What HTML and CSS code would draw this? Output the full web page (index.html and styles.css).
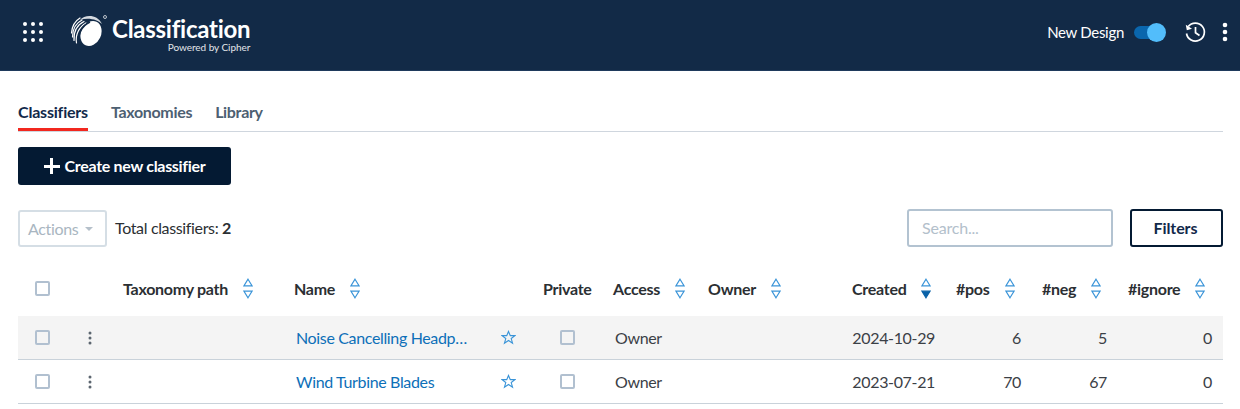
FILE: index.html
```html
<!DOCTYPE html>
<html lang="en">
<head>
<meta charset="utf-8">
<title>Classification</title>
<link rel="stylesheet" href="styles.css">
</head>
<body>
<header class="navbar">
  <div class="brand-group">
    <svg class="apps" viewBox="0 0 20 20" width="20" height="20" aria-hidden="true">
      <g fill="#fff">
        <circle cx="2" cy="2" r="2"/><circle cx="10" cy="2" r="2"/><circle cx="18" cy="2" r="2"/>
        <circle cx="2" cy="10" r="2"/><circle cx="10" cy="10" r="2"/><circle cx="18" cy="10" r="2"/>
        <circle cx="2" cy="18" r="2"/><circle cx="10" cy="18" r="2"/><circle cx="18" cy="18" r="2"/>
      </g>
    </svg>
    <svg class="logo" viewBox="0 0 38 34" width="38" height="34" aria-hidden="true">
      <ellipse cx="21" cy="19.500" rx="10" ry="13" fill="#fff" transform="rotate(25 21 19.500)"/>
      <path d="M10 6C15 0.500 27 0 32 10C28 5.500 18 3 10 6Z" fill="#d5dae0"/>
      <g fill="none" stroke="#fff" stroke-width="1.200" stroke-linecap="round">
        <path d="M1.500 19C2 12 5 7 10 4"/>
        <path d="M2.500 23C2.500 15 6 9 12 6"/>
        <path d="M4 26.500C3.500 18 7 11 14 7.500"/>
        <path d="M6.500 29C5 21 9 13 16 9"/>
      </g>
      <path d="M10 31C6.500 22 11 12 20 8" fill="none" stroke="#122a47" stroke-width="1.600"/>
      <circle cx="35" cy="3" r="1.500" fill="none" stroke="#fff" stroke-width=".7"/>
    </svg>
    <div class="brand">
      <span class="brand-name">Classification</span>
      <span class="brand-sub">Powered by Cipher</span>
    </div>
  </div>
  <div class="nav-right">
    <span class="nav-label">New Design</span>
    <span class="toggle"><span class="toggle-knob"></span></span>
    <svg class="history" viewBox="0 0 24 24" width="24" height="24" aria-hidden="true">
      <path d="M5.200 6.600A9 9 0 1 1 3.500 13.500" fill="none" stroke="#fff" stroke-width="1.700"/>
      <path d="M2.800 4.800L3.800 10.200L9 8.800Z" fill="#fff"/>
      <path d="M12.500 7V12.700L16.500 15.500" fill="none" stroke="#fff" stroke-width="1.700"/>
    </svg>
    <svg class="kebab-nav" viewBox="0 0 6 20" width="6" height="20" aria-hidden="true">
      <g fill="#fff"><circle cx="3" cy="3" r="2.300"/><circle cx="3" cy="10" r="2.300"/><circle cx="3" cy="17" r="2.300"/></g>
    </svg>
  </div>
</header>

<main class="content">
  <nav class="tabs">
    <a class="tab tab-active">Classifiers</a>
    <a class="tab">Taxonomies</a>
    <a class="tab">Library</a>
  </nav>

  <button class="create-btn"><span class="plus"></span><span class="create-label">Create new classifier</span></button>

  <div class="toolbar">
    <div class="toolbar-left">
      <button class="actions-btn">Actions<span class="caret"></span></button>
      <span class="total">Total classifiers: <b>2</b></span>
    </div>
    <div class="toolbar-right">
      <input class="search" type="text" placeholder="Search...">
      <button class="filters-btn"><span class="filters-label">Filters</span></button>
    </div>
  </div>

  <div class="grid-table">
    <div class="row row-head">
      <div class="cell"><span class="checkbox"></span></div>
      <div class="cell"></div>
      <div class="cell head">Taxonomy path<svg class="sort" viewBox="0 0 10 21" width="10" height="21"><path d="M5 1.200L9 7.800H1Z"/><path d="M5 19.800L9 13.200H1Z"/></svg></div>
      <div class="cell head">Name<svg class="sort" viewBox="0 0 10 21" width="10" height="21"><path d="M5 1.200L9 7.800H1Z"/><path d="M5 19.800L9 13.200H1Z"/></svg></div>
      <div class="cell"></div>
      <div class="cell head">Private</div>
      <div class="cell head">Access<svg class="sort" viewBox="0 0 10 21" width="10" height="21"><path d="M5 1.200L9 7.800H1Z"/><path d="M5 19.800L9 13.200H1Z"/></svg></div>
      <div class="cell head">Owner<svg class="sort" viewBox="0 0 10 21" width="10" height="21"><path d="M5 1.200L9 7.800H1Z"/><path d="M5 19.800L9 13.200H1Z"/></svg></div>
      <div class="cell head">Created<svg class="sort" viewBox="0 0 10 21" width="10" height="21"><path d="M5 1.200L9 7.800H1Z"/><path class="sort-on" d="M5 19.800L9 13.200H1Z"/></svg></div>
      <div class="cell head">#pos<svg class="sort" viewBox="0 0 10 21" width="10" height="21"><path d="M5 1.200L9 7.800H1Z"/><path d="M5 19.800L9 13.200H1Z"/></svg></div>
      <div class="cell head">#neg<svg class="sort" viewBox="0 0 10 21" width="10" height="21"><path d="M5 1.200L9 7.800H1Z"/><path d="M5 19.800L9 13.200H1Z"/></svg></div>
      <div class="cell head">#ignore<svg class="sort" viewBox="0 0 10 21" width="10" height="21"><path d="M5 1.200L9 7.800H1Z"/><path d="M5 19.800L9 13.200H1Z"/></svg></div>
    </div>

    <div class="row row-body row-shaded">
      <div class="cell"><span class="checkbox"></span></div>
      <div class="cell cell-center"><svg class="kebab" viewBox="0 0 4 14" width="4" height="14"><circle cx="2" cy="2" r="1.500"/><circle cx="2" cy="7" r="1.500"/><circle cx="2" cy="12" r="1.500"/></svg></div>
      <div class="cell"></div>
      <div class="cell cell-name"><a class="link">Noise Cancelling Headphones</a></div>
      <div class="cell cell-star"><svg class="star" viewBox="0 0 16 16" width="15" height="15"><path d="M8 1.500L9.900 6H14.800L10.900 9.100L12.300 14L8 11.200L3.700 14L5.100 9.100L1.200 6H6.100Z"/></svg></div>
      <div class="cell cell-private"><span class="checkbox"></span></div>
      <div class="cell cell-access">Owner</div>
      <div class="cell"></div>
      <div class="cell cell-date">2024-10-29</div>
      <div class="cell cell-num">6</div>
      <div class="cell cell-num">5</div>
      <div class="cell cell-num">0</div>
    </div>

    <div class="row row-body">
      <div class="cell"><span class="checkbox"></span></div>
      <div class="cell cell-center"><svg class="kebab" viewBox="0 0 4 14" width="4" height="14"><circle cx="2" cy="2" r="1.500"/><circle cx="2" cy="7" r="1.500"/><circle cx="2" cy="12" r="1.500"/></svg></div>
      <div class="cell"></div>
      <div class="cell cell-name"><a class="link">Wind Turbine Blades</a></div>
      <div class="cell cell-star"><svg class="star" viewBox="0 0 16 16" width="15" height="15"><path d="M8 1.500L9.900 6H14.800L10.900 9.100L12.300 14L8 11.200L3.700 14L5.100 9.100L1.200 6H6.100Z"/></svg></div>
      <div class="cell cell-private"><span class="checkbox"></span></div>
      <div class="cell cell-access">Owner</div>
      <div class="cell"></div>
      <div class="cell cell-date">2023-07-21</div>
      <div class="cell cell-num">70</div>
      <div class="cell cell-num">67</div>
      <div class="cell cell-num">0</div>
    </div>
  </div>
</main>
</body>
</html>
```

FILE: styles.css
```css
* { box-sizing: border-box; }
html, body { margin: 0; padding: 0; }
body {
  font-family: Lato, "Liberation Sans", sans-serif;
  font-size: 16px;
  letter-spacing: -0.35px;
  color: #2b2f33;
  background: #fff;
  overflow: hidden;
}
.navbar {
  height: 71px;
  background: #122a47;
  border-bottom: 1px solid #1f3a5c;
  display: flex;
  align-items: center;
  justify-content: space-between;
  padding: 0 12px 6px 23px;
}
.brand-group { display: flex; align-items: center; }
.logo { margin-left: 27px; margin-top: -2px; flex: none; }
.brand { display: flex; flex-direction: column; align-items: flex-end; margin-left: 4px; color: #fff; }
.brand-name { font-size: 24px; font-weight: 700; line-height: 26px; margin-top: 3px; letter-spacing: -0.25px; }
.brand-sub { font-size: 10px; line-height: 10px; color: #e2e6ea; letter-spacing: -0.05px; }
.nav-right { display: flex; align-items: center; }
.nav-label { color: #fff; font-size: 15px; letter-spacing: -0.3px; }
.toggle {
  position: relative;
  width: 30px;
  height: 13px;
  margin-left: 10px;
  border-radius: 7px;
  background: #0a66ad;
}
.toggle-knob {
  position: absolute;
  right: -2px;
  top: -3px;
  width: 19px;
  height: 19px;
  border-radius: 50%;
  background: #52bdfb;
}
.history { margin-left: 19px; }
.kebab-nav { margin-left: 15px; }

.content { padding: 0 17px 0 18px; }
.tabs {
  display: flex;
  gap: 23px;
  height: 61px;
  align-items: flex-end;
  border-bottom: 1px solid #cfd6de;
}
.tab {
  font-size: 16px;
  font-weight: 700;
  letter-spacing: -0.32px;
  color: #4d6072;
  height: 28px;
  line-height: 18px;
}
.tab-active { color: #12294a; letter-spacing: -0.2px; border-bottom: 3px solid #f2281f; }

.create-btn {
  display: flex;
  align-items: center;
  justify-content: center;
  width: 213px;
  height: 38px;
  margin-top: 15px;
  border: 0;
  border-radius: 3px;
  background: #041a33;
  color: #fff;
  font: 700 16px Lato, sans-serif;
  letter-spacing: -0.3px;
}
.create-label { margin-bottom: 2px; }
.plus { position: relative; width: 16px; height: 16px; margin-right: 5px; }
.plus::before, .plus::after { content: ""; position: absolute; background: #fff; }
.plus::before { left: 0; right: 0; top: 6.500px; height: 3px; }
.plus::after { top: 0; bottom: 0; left: 6.500px; width: 3px; }

.toolbar {
  display: flex;
  justify-content: space-between;
  align-items: center;
  height: 38px;
  margin-top: 24px;
}
.toolbar-left, .toolbar-right { display: flex; align-items: center; }
.actions-btn {
  display: flex;
  align-items: center;
  width: 89px;
  height: 37px;
  margin-top: 1px;
  padding: 0 0 0 8px;
  border: 2px solid #d5dee5;
  border-radius: 3px;
  background: #fff;
  color: #a9b6c1;
  font: 400 16px Lato, sans-serif;
  letter-spacing: -0.35px;
}
.caret {
  margin-left: 7px;
  width: 0;
  height: 0;
  border-left: 4.500px solid transparent;
  border-right: 4.500px solid transparent;
  border-top: 4.500px solid #b5c0ca;
}
.total { margin: 0 0 2px 8px; font-size: 16px; color: #2b2f33; }
.total b { font-weight: 700; }
.search {
  width: 206px;
  height: 38px;
  padding: 0 13px 2px;
  border: 2px solid #b3c3d1;
  border-radius: 3px;
  font: 400 16px Lato, sans-serif;
  letter-spacing: -0.2px;
  outline: 0;
}
.search::placeholder { color: #b3c0cb; opacity: 1; }
.filters-btn {
  display: flex;
  align-items: center;
  justify-content: center;
  width: 93px;
  height: 38px;
  margin-left: 17px;
  border: 2px solid #041a33;
  border-radius: 3px;
  background: #fff;
  color: #12294a;
  font: 700 16px Lato, sans-serif;
  letter-spacing: -0.1px;
}
.filters-label { margin: 0 2px 2px 0; }

.grid-table { margin-top: 23px; }
.row {
  display: grid;
  grid-template-columns: 49px 46px 171px 206px 43px 70px 95px 144px 104px 86px 86px 105px;
  align-items: center;
}
.row-head { height: 46px; padding-bottom: 10px; }
.row-body { height: 44px; border-bottom: 1px solid #c9d2da; }
.row-shaded { background: #f4f4f4; }
.cell { min-width: 0; display: flex; align-items: center; padding-left: 10px; }
.head { font-weight: 700; color: #2b2f33; letter-spacing: -0.27px; }
.checkbox {
  display: block;
  width: 15px;
  height: 15px;
  margin-left: 7px;
  border: 2px solid #b1c0d0;
  border-radius: 2px;
  background: #fff;
}
.row-shaded .checkbox { background: #f4f4f4; }
.sort { margin-left: 15px; fill: #fff; stroke: #3a94d8; stroke-width: 1.200; flex: none; }
.sort-on { fill: #0a62a8; stroke: #0a62a8; }
.cell-center { justify-content: center; padding-left: 0; }
.kebab { fill: #5c6670; }
.cell-star { justify-content: center; padding: 0 7px 0 0; }
.star { fill: none; stroke: #3a94d8; stroke-width: 1.200; }
.cell-name { padding-left: 12px; }
.link {
  display: block;
  width: 174px;
  color: #0d6fb8;
  white-space: nowrap;
  overflow: hidden;
  text-overflow: ellipsis;
}
.cell-private { padding-left: 20px; }
.cell-access { padding-left: 12px; color: #3b4046; }
.cell-date { padding: 0 11px 0 0; justify-content: flex-end; color: #3b4046; }
.cell-num { padding: 0 11px 0 0; justify-content: flex-end; color: #3b4046; }
```
